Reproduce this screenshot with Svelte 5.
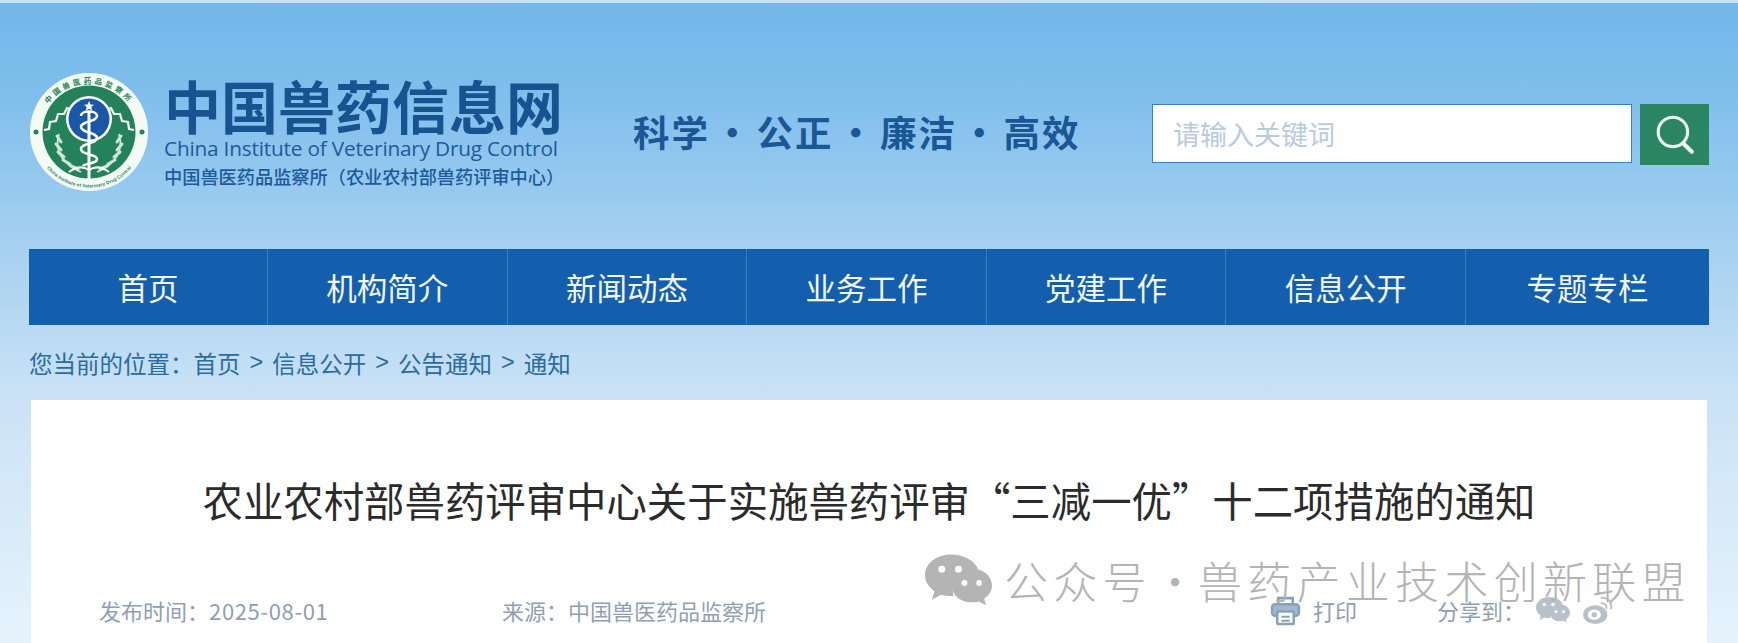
<script lang="ts">
	const navItems = ['首页', '机构简介', '新闻动态', '业务工作', '党建工作', '信息公开', '专题专栏'];
	const crumbs = ['首页', '信息公开', '公告通知', '通知'];
	const slogans = ['科学', '公正', '廉洁', '高效'];
	const cjk = '"Noto Sans CJK SC", sans-serif';
</script>

{#snippet wechat(color: string)}
	<svg class="wechat" viewBox="0 0 68 52" fill={color} aria-hidden="true">
		<path d="M26 0C11.600 0 0 9.400 0 21c0 6.600 3.700 12.400 9.600 16.300L7 46l9.400-5c3 .9 6.200 1.300 9.600 1.300 1 0 2 0 3-.1-.7-2.200-1-4.400-1-6.700C28 24 38.800 14.800 52 14.800c.6 0 1.200 0 1.700.1C50.800 6.200 39.500 0 26 0z" />
		<path d="M68 35c0-9.500-9.300-17.200-20.500-17.200S27 25.500 27 35s9.300 17.200 20.500 17.200c2.500 0 4.900-.4 7.100-1l7.400 4-2-6.800C65 45.200 68 40.400 68 35z" transform="translate(0 -3.500)" />
		<circle cx="17" cy="15" r="3.500" fill="#fff" />
		<circle cx="34" cy="15" r="3.500" fill="#fff" />
		<circle cx="40" cy="29" r="3" fill="#fff" />
		<circle cx="55" cy="29" r="3" fill="#fff" />
	</svg>
{/snippet}

<div class="page" style:--cjk={cjk}>
	<header class="top">
		<svg class="logo" viewBox="0 0 120 120" aria-hidden="true">
			<defs>
				<path id="ring-top" d="M9.500 62A50.500 50.500 0 0 1 110.500 62" />
				<path id="ring-bottom" d="M7.500 60A52.500 52.500 0 0 0 112.500 60" />
			</defs>
			<circle cx="60" cy="60" r="59" fill="#f4faf4" />
			<circle cx="60" cy="60" r="46.500" fill="#238259" />
			<path
				d="M15 58l5-1 1-7 6-1 2-7 6 0 3-6 6 2 5-6 5 3 6-3 6 3 5-3 5 6 6-2 3 6 6 0 2 7 6 1 1 7 5 1"
				fill="none"
				stroke="#f4faf4"
				stroke-width="2.200"
			/>
			<text class="ring zh"><textPath href="#ring-top" startOffset="50%" text-anchor="middle">中国兽医药品监察所</textPath></text>
			<text class="ring en"><textPath href="#ring-bottom" startOffset="50%" text-anchor="middle">China Institute of Veterinary Drug Control</textPath></text>
			<circle cx="7" cy="60" r="2.500" fill="#238259" />
			<circle cx="113" cy="60" r="2.500" fill="#238259" />
			<circle cx="60" cy="47" r="23" fill="#fff" />
			<circle cx="60" cy="47" r="20.500" fill="#1b57a8" />
			<path d="M60 29l1.500 3.500 3.500.3-2.700 2.300.9 3.500-3.200-1.900-3.200 1.900.9-3.500-2.700-2.300 3.500-.3z" fill="#fff" />
			<path d="M60 39v68" stroke="#fff" stroke-width="3" />
			<path
				d="M52 44c0-6 16-6 16 0s-16 5-16 11 16 5 16 11-16 5-16 11 16 5 16 10-12 4-14 7"
				fill="none"
				stroke="#fff"
				stroke-width="2.500"
			/>
			<path d="M30 62c-5 16 3 30 22 38M90 62c5 16-3 30-22 38" fill="none" stroke="#cfe6d2" stroke-width="1.800" />
			<path
				d="M28 64l4 6M27 72l5 6M29 80l6 5M34 88l7 4M42 94l7 3M92 64l-4 6M93 72l-5 6M91 80l-6 5M86 88l-7 4M78 94l-7 3"
				fill="none"
				stroke="#cfe6d2"
				stroke-width="3"
				stroke-linecap="round"
			/>
			<path d="M40 100c8-6 14-6 20-2 6-4 12-4 20 2" fill="none" stroke="#fff" stroke-width="2" />
		</svg>

		<div class="brand">
			<div class="brand-name">中国兽药信息网</div>
			<div class="brand-en">China Institute of Veterinary Drug Control</div>
			<div class="brand-org">中国兽医药品监察所（农业农村部兽药评审中心）</div>
		</div>

		<div class="slogan">
			{#each slogans as word, i}
				{#if i > 0}<span class="dot">·</span>{/if}
				<span>{word}</span>
			{/each}
		</div>

		<form class="search">
			<input type="text" placeholder="请输入关键词" />
			<button type="button" aria-label="搜索">
				<svg viewBox="0 0 40 40" width="42" height="42" fill="none" stroke="#eef7f2" aria-hidden="true">
					<circle cx="18" cy="18" r="14" stroke-width="3" />
					<path d="M28 29l8 8" stroke-width="4" stroke-linecap="round" />
				</svg>
			</button>
		</form>
	</header>

	<nav class="nav">
		{#each navItems as item}
			<a href="#top">{item}</a>
		{/each}
	</nav>

	<div class="crumbs">
		<span>您当前的位置：</span>
		{#each crumbs as crumb, i}
			{#if i > 0}<span class="sep">&gt;</span>{/if}
			<span>{crumb}</span>
		{/each}
	</div>

	<main class="card">
		<h1>农业农村部兽药评审中心关于实施兽药评审“三减一优”十二项措施的通知</h1>

		<div class="watermark">
			{@render wechat('#b4b4b4')}
			<span>公众号<span class="wm-dot">·</span>兽药产业技术创新联盟</span>
		</div>

		<div class="meta">
			<span class="date">发布时间：<span class="digits">2025-08-01</span></span>
			<span class="source">来源：中国兽医药品监察所</span>
			<span class="print">
				<svg viewBox="0 0 30 30" width="31" height="31" fill="none" stroke="#86a2bc" stroke-width="2.500" aria-hidden="true">
					<path d="M8 9V3h14v6" />
					<rect x="2" y="9" width="26" height="11" rx="3" fill="#a3b9cd" />
					<rect x="7" y="16" width="16" height="12" rx="1" fill="#fff" />
					<path d="M11 21h8M11 25h8" stroke-width="2" />
				</svg>
				打印
			</span>
			<span class="share">
				分享到：
				{@render wechat('#b8c1ca')}
				<svg class="weibo" viewBox="0 0 32 30" aria-hidden="true">
					<ellipse cx="13" cy="20" rx="13" ry="10" fill="#b8c1ca" />
					<ellipse cx="12" cy="20" rx="7" ry="5.500" fill="#fff" />
					<circle cx="12" cy="20" r="2.800" fill="#b8c1ca" />
					<path d="M19 8c4-1 7 2 6 6M19 2c7-1 12 4 11 12" fill="none" stroke="#b8c1ca" stroke-width="2.200" />
				</svg>
			</span>
		</div>
	</main>
</div>

<style>
	:global(body) {
		margin: 0;
	}

	.page {
		box-sizing: border-box;
		height: 643px;
		overflow: hidden;
		padding: 0 29px;
		border-top: 3px solid #c4e1f6;
		font-family: var(--cjk);
		background: linear-gradient(180deg, #72b7ea 0, #7fbeec 90px, #a5d0f0 240px, #cbe3f6 400px, #e6f3fc 643px);
	}

	.top {
		box-sizing: border-box;
		display: flex;
		align-items: center;
		height: 246px;
		padding-top: 16px;
	}

	.logo {
		flex: none;
		width: 120px;
		height: 120px;
		margin: -4px 15px 0 0;
	}

	.logo .ring {
		fill: #238259;
		font-weight: 700;
	}

	.logo .zh {
		font-size: 7.500px;
		letter-spacing: 3px;
	}

	.logo .en {
		font-family: "Liberation Sans", sans-serif;
		font-size: 4.600px;
		dominant-baseline: hanging;
	}

	.brand {
		flex: none;
		width: 412px;
		margin-top: -4px;
		color: #1c5a9c;
	}

	.brand-name {
		font-size: 57px;
		font-weight: 700;
		line-height: 62px;
		white-space: nowrap;
		color: #17548f;
	}

	.brand-en {
		font-family: "Open Sans", sans-serif;
		font-size: 20.800px;
		line-height: 26px;
		letter-spacing: -0.2px;
		white-space: nowrap;
	}

	.brand-org {
		font-size: 18.200px;
		line-height: 30px;
		font-weight: 500;
		white-space: nowrap;
	}

	.slogan {
		flex: none;
		display: flex;
		gap: 4px;
		margin: -6px 0 0 57px;
		font-size: 36.500px;
		font-weight: 700;
		letter-spacing: 2px;
		color: #1b5794;
		white-space: nowrap;
	}

	.search {
		display: flex;
		gap: 8px;
		margin: 0 0 0 auto;
	}

	.search input {
		box-sizing: border-box;
		width: 480px;
		height: 59px;
		padding: 0 20px;
		border: 1px solid #3b7cc4;
		border-radius: 0;
		outline: none;
		background: #fff;
		font-family: var(--cjk);
		font-size: 27px;
	}

	.search input::placeholder {
		color: #b8cae2;
		opacity: 1;
	}

	.search button {
		display: flex;
		align-items: center;
		justify-content: center;
		width: 69px;
		height: 61px;
		padding: 0;
		border: 0;
		background: #2a8563;
	}

	.nav {
		display: grid;
		grid-template-columns: 238px repeat(5, 239.600px) 1fr;
		height: 76px;
		background: #135ead;
	}

	.nav a {
		display: flex;
		align-items: center;
		justify-content: center;
		color: #f3f8fd;
		font-size: 30.500px;
		text-decoration: none;
		border-left: 1px solid #3d7cbd;
	}

	.nav a:first-child {
		border-left: 0;
	}

	.crumbs {
		display: flex;
		align-items: center;
		height: 75px;
		font-size: 23.500px;
		color: #2d6b9e;
		white-space: nowrap;
	}

	.crumbs .sep {
		margin: 0 9px;
		font-family: "Liberation Sans", sans-serif;
	}

	.card {
		position: relative;
		height: 250px;
		margin: 0 2px;
		background: #fff;
	}

	h1 {
		margin: 0;
		padding-top: 73px;
		font-size: 40.400px;
		font-weight: 400;
		line-height: 54px;
		text-align: center;
		color: #2b2b2b;
	}

	.watermark {
		position: absolute;
		top: 148px;
		left: 894px;
		display: flex;
		align-items: center;
		gap: 12px;
		font-size: 44px;
		font-weight: 300;
		letter-spacing: 5.300px;
		color: #b4b4b4;
		white-space: nowrap;
	}

	.wm-dot {
		display: inline-block;
		width: 46px;
		text-align: center;
		letter-spacing: 0;
	}

	.watermark .wechat {
		width: 67px;
		height: 52px;
	}

	.meta {
		display: flex;
		align-items: center;
		height: 50px;
		margin-top: 58px;
		padding-left: 68px;
		font-size: 22px;
		color: #8f9fb2;
		white-space: nowrap;
	}

	.digits {
		letter-spacing: 0.650px;
	}

	.date {
		width: 403px;
	}

	.source {
		width: 768px;
	}

	.print {
		display: flex;
		align-items: center;
		gap: 12px;
		width: 167px;
	}

	.share {
		display: flex;
		align-items: center;
		gap: 12px;
	}

	.share .wechat {
		width: 34px;
		height: 26px;
		margin-left: -1px;
	}

	.weibo {
		width: 32px;
		height: 28px;
	}
</style>
